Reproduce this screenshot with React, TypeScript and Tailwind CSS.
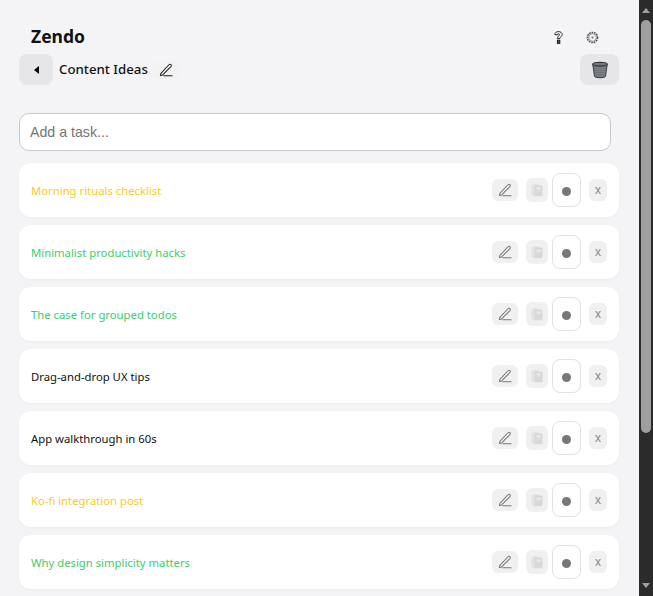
import React from "react";

const Pencil = ({ size = 16, color = "#222" }: { size?: number; color?: string }) => (
  <svg width={size} height={size} viewBox="0 0 16 16" fill="none" stroke={color} strokeWidth="1.15" strokeLinejoin="round" strokeLinecap="round">
    <path d="M2.2 11.8 L1.6 14.4 L4.2 13.6 L13.6 4.2 C14.4 3.3 14.2 2.4 13.6 1.9 C12.9 1.3 12.1 1.3 11.4 2 Z" />
    <path d="M5.5 14.6 H15" />
  </svg>
);

const Book = () => (
  <svg width="12" height="14" viewBox="0 0 13 15">
    <path d="M0.5 2.5 L4 0.8 L8 1.5 L8 13 L4.5 14.6 L0.5 12.6 Z" fill="#e2e2e4" />
    <rect x="4" y="2.6" width="8.5" height="11.6" rx="1.4" fill="#d8d8da" />
    <path d="M6 5.5 H10.5" stroke="#f6f6f7" strokeWidth="1.1" />
    <path d="M6 7.5 H10.5" stroke="#ebebed" strokeWidth="0.9" />
  </svg>
);

const Trash = () => (
  <svg width="16" height="18" viewBox="0 0 15 16">
    <defs>
      <pattern id="mesh" width="2" height="2" patternUnits="userSpaceOnUse">
        <rect width="2" height="2" fill="#7f8488" />
        <rect width="1" height="1" fill="#5b6064" />
      </pattern>
    </defs>
    <ellipse cx="7.5" cy="2.6" rx="6.9" ry="1.9" fill="#70767a" stroke="#26282a" strokeWidth="1" />
    <path d="M0.8 3 L2.4 14.2 C3 15.6 12 15.6 12.6 14.2 L14.2 3 C12 4.9 3 4.9 0.8 3 Z" fill="url(#mesh)" stroke="#34373a" strokeWidth="0.9" />
  </svg>
);

const Gear = () => (
  <svg width="13" height="13" viewBox="0 0 13 13" fill="none">
    <circle cx="6.5" cy="6.5" r="5.1" stroke="#4a4a4a" strokeWidth="1.5" strokeDasharray="1.6 0.9" />
    <circle cx="6.5" cy="6.5" r="3.9" fill="#efeff1" stroke="#666" strokeWidth="0.7" />
    <circle cx="6.5" cy="6.5" r="1.1" fill="#777" />
  </svg>
);

const Question = () => (
  <svg width="9" height="13" viewBox="0 0 9 13" fill="none" stroke="#222" strokeWidth="1">
    <path d="M0.8 3.6 C0.8 1.6 2.6 0.6 4.5 0.6 C6.6 0.6 8.2 1.8 8.2 3.6 C8.2 5.2 6 5.6 5.8 7.6 H3.4 C3.4 5.4 5.4 5 5.4 3.7 C5.4 3 5 2.7 4.4 2.7 C3.8 2.7 3.4 3.1 3.4 3.9 Z" fill="#fff" />
    <rect x="3.4" y="9.2" width="2.4" height="3.2" fill="#444" />
  </svg>
);

const tasks = [
  { text: "Morning rituals checklist", color: "text-[#ffca1a]" },
  { text: "Minimalist productivity hacks", color: "text-[#38cf6c]" },
  { text: "The case for grouped todos", color: "text-[#38cf6c]" },
  { text: "Drag-and-drop UX tips", color: "text-[#111111]" },
  { text: "App walkthrough in 60s", color: "text-[#111111]" },
  { text: "Ko-fi integration post", color: "text-[#ffca1a]" },
  { text: "Why design simplicity matters", color: "text-[#38cf6c]" },
];

function Row({ text, color }: { text: string; color: string }) {
  return (
    <div className="flex h-[54px] shrink-0 items-center justify-between rounded-[12px] bg-white pl-3 pr-3 shadow-[0_1px_3px_rgba(0,0,0,0.03)]">
      <span className={`mt-0.5 text-[11.3px] ${color}`}>{text}</span>
      <div className="flex items-center">
        <div className="flex h-[22px] w-[26px] items-center justify-center rounded-[6px] bg-[#f0f0f1]">
          <Pencil size={14} color="#777" />
        </div>
        <div className="ml-2 flex h-[24px] w-[22px] items-center justify-center rounded-[6px] bg-[#f0f0f1]">
          <Book />
        </div>
        <div className="ml-1 flex h-[34px] w-[29px] items-center justify-center rounded-[8px] border border-[#e2e2e4] bg-white">
          <span className="mt-[3px] block h-[9px] w-[9px] rounded-full bg-[#777]" />
        </div>
        <div className="ml-2 flex h-[22px] w-[18px] items-center justify-center rounded-[6px] bg-[#f0f0f1] font-['Liberation_Sans'] text-[12px] text-[#888]">
          x
        </div>
      </div>
    </div>
  );
}

export default function App() {
  return (
    <div className="flex h-[596px] w-[653px] overflow-hidden bg-[#f4f4f7] font-['Noto_Sans',sans-serif]">
      <main className="flex w-[639px] flex-col pl-[19px] pr-[20px] pt-[26px]">
        <div className="flex h-[22px] items-center justify-between pl-3 pr-[20px]">
          <h1 className="text-[17.5px] font-bold leading-none text-[#111]">Zendo</h1>
          <div className="flex items-center gap-[23px]">
            <Question />
            <Gear />
          </div>
        </div>
        <div className="mt-[6px] flex h-[31px] items-center justify-between">
          <div className="flex items-center">
            <div className="flex h-[31px] w-[34px] items-center justify-center rounded-[8px] bg-[#e6e6ea]">
              <span className="block h-0 w-0 border-y-[4px] border-r-[5px] border-y-transparent border-r-black" />
            </div>
            <span className="ml-[6px] text-[13.25px] font-medium text-[#111]">Content Ideas</span>
            <div className="ml-[5px] flex h-[16px] w-[26px] items-center justify-center bg-[#f2f2f3]">
              <Pencil size={14} />
            </div>
          </div>
          <div className="flex h-[31px] w-[39px] items-center justify-center rounded-[8px] bg-[#e6e6ea]">
            <Trash />
          </div>
        </div>
        <div className="mt-7 pr-2">
          <input
            placeholder="Add a task..."
            className="h-[38px] w-full rounded-[10px] border border-[#c8c8cb] bg-white px-[10px] font-['Liberation_Sans'] text-[14.2px] outline-none placeholder:text-[#757575]"
          />
        </div>
        <div className="mt-3 flex flex-col gap-2">
          {tasks.map((t) => (
            <Row key={t.text} text={t.text} color={t.color} />
          ))}
        </div>
      </main>
      <aside className="flex w-[14px] flex-col items-center bg-[#2b2b2b] pt-[8px]">
        <span className="block h-0 w-0 border-x-[4px] border-b-[5px] border-x-transparent border-b-[#a0a0a0]" />
        <div className="mt-[7px] h-[413px] w-[10px] rounded-[5px] bg-[#9f9f9f]" />
        <div className="flex-1" />
        <span className="mb-[8px] block h-0 w-0 border-x-[4px] border-t-[5px] border-x-transparent border-t-[#a0a0a0]" />
      </aside>
    </div>
  );
}
